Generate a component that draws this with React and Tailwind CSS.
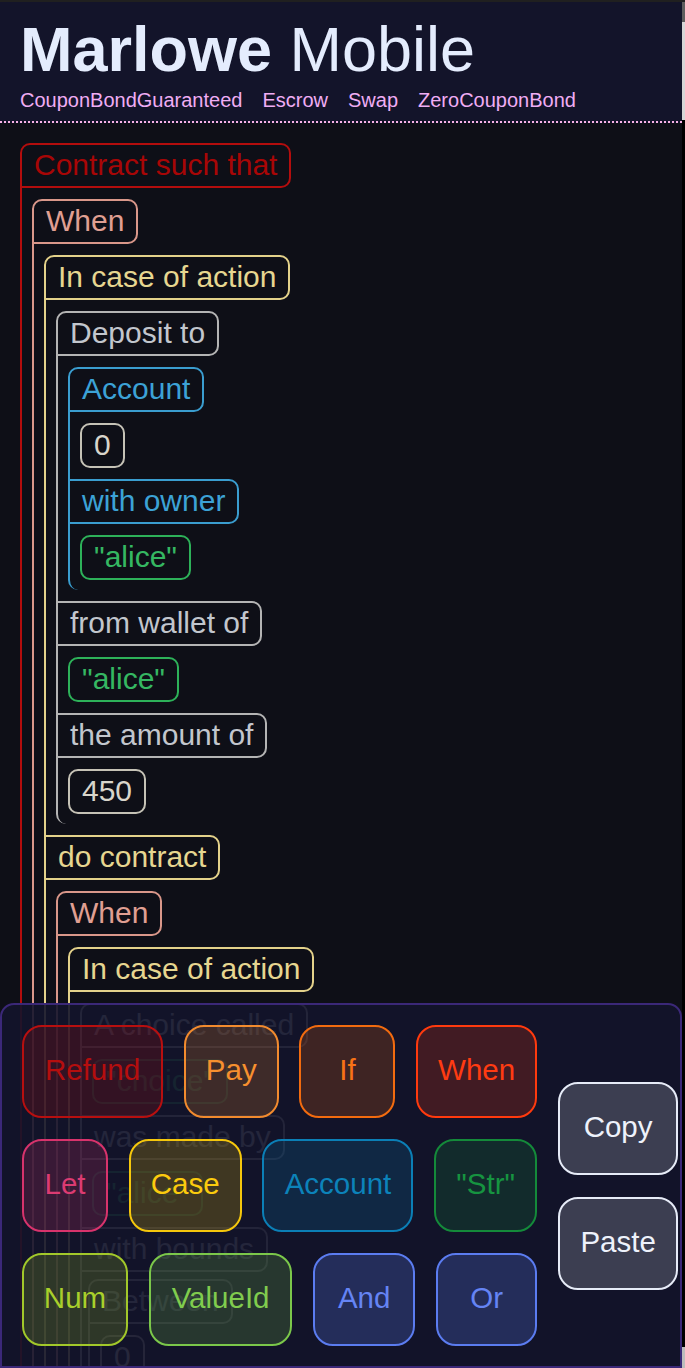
const T = {
    contract: 'border-[#b30d0d] text-[#a80606]',
    when: 'border-[#d9978a] text-[#e09f92]',
    case: 'border-[#e3d18a] text-[#e6d690]',
    action: 'border-[#b4b4b4] text-[#c2c6cd]',
    account: 'border-[#3a9dcf] text-[#3ca2d6]',
    num: 'border-[#c5c2b6] text-[#d8d5cb]',
    str: 'border-[#2db159] text-[#35b762]',
};

const box = 'h-[45px] px-3 pb-[2px] border-2 flex items-center text-[30px] leading-none whitespace-nowrap';

function Label({ tone, children }) {
    return <div className={`${box} -ml-[2px] rounded-tr-[10px] rounded-br-[10px] ${tone}`}>{children}</div>;
}

function Leaf({ tone, children }) {
    return <div className={`${box} ml-[10px] rounded-[10px] ${tone}`}>{children}</div>;
}

function Node({ title, tone, child, children }) {
    return (
        <div className={`flex flex-col items-start ${child ? 'ml-[10px]' : ''}`}>
            <div className={`${box} rounded-t-[10px] rounded-br-[10px] ${tone}`}>{title}</div>
            <div className={`border-l-2 rounded-bl-[10px] pt-[11px] pb-[10px] flex flex-col items-start gap-[11px] ${tone}`}>
                {children}
            </div>
        </div>
    );
}

function Key({ className, children }) {
    return (
        <div className={`h-[93px] pb-[3px] rounded-[20px] border-2 flex items-center justify-center text-[29.5px] leading-none ${className}`}>
            {children}
        </div>
    );
}

export default function App() {
    return (
        <div
            className="relative h-[1368px] overflow-hidden flex bg-[#0e0f17] border-t-2 border-[#202020]"
            style={{ fontFamily: '"Liberation Sans", Arial, sans-serif' }}
        >
            <div className="w-[682px] flex flex-col">
                <header className="bg-[#13142a] pl-5 pt-[16px] pb-[9px] border-b-2 border-dotted border-[#f7b2e6]">
                    <h1 className="text-[63px] leading-[62px] text-[#e4ecfd]">
                        <span className="font-bold">Marlowe</span> Mobile
                    </h1>
                    <nav className="mt-[8px] flex gap-5 text-[20px] leading-[24px] text-[#f0adf4]">
                        <span>CouponBondGuaranteed</span>
                        <span>Escrow</span>
                        <span>Swap</span>
                        <span>ZeroCouponBond</span>
                    </nav>
                </header>

                <main className="pl-5 pt-5">
                    <Node title="Contract such that" tone={T.contract}>
                        <Node title="When" tone={T.when} child>
                            <Node title="In case of action" tone={T.case} child>
                                <Node title="Deposit to" tone={T.action} child>
                                    <Node title="Account" tone={T.account} child>
                                        <Leaf tone={T.num}>0</Leaf>
                                        <Label tone={T.account}>with owner</Label>
                                        <Leaf tone={T.str}>"alice"</Leaf>
                                    </Node>
                                    <Label tone={T.action}>from wallet of</Label>
                                    <Leaf tone={T.str}>"alice"</Leaf>
                                    <Label tone={T.action}>the amount of</Label>
                                    <Leaf tone={T.num}>450</Leaf>
                                </Node>
                                <Label tone={T.case}>do contract</Label>
                                <Node title="When" tone={T.when} child>
                                    <Node title="In case of action" tone={T.case} child>
                                        <Node title="A choice called" tone={T.action} child>
                                            <Leaf tone={T.str}>"choice"</Leaf>
                                            <Label tone={T.action}>was made by</Label>
                                            <Leaf tone={T.str}>"alice"</Leaf>
                                            <Label tone={T.action}>with bounds</Label>
                                            <div className="-mt-[4px] -ml-[4px]">
                                                <Node title="Between" tone={T.action} child>
                                                    <Leaf tone={T.num}>0</Leaf>
                                                </Node>
                                            </div>
                                        </Node>
                                    </Node>
                                </Node>
                            </Node>
                        </Node>
                    </Node>
                </main>
            </div>

            <div className="w-[3px] flex flex-col">
                <div className="h-[20px] bg-[#5e5e5e]" />
                <div className="h-[98px] bg-[#d6d6d6]" />
                <div className="flex-1 bg-black" />
                <div className="h-[21px] bg-[#bdbdbd]" />
            </div>

            <div className="absolute left-0 bottom-0 w-[682px] h-[365px] rounded-t-[14px] border-2 border-[#3b2878] bg-[#13142b]/90 flex items-center pl-[20px] pr-[2px] gap-[21px]">
                <div className="w-[516px] flex flex-col gap-[21px]">
                    <div className="flex justify-between">
                        <Key className="w-[141px] border-[#b80f0f] bg-[#b80f0f]/20 text-[#b50e0e]">Refund</Key>
                        <Key className="w-[95px] border-[#f28b2e] bg-[#f28b2e]/20 text-[#f7902f]">Pay</Key>
                        <Key className="w-[96px] border-[#f26b0f] bg-[#f26b0f]/20 text-[#f77216]">If</Key>
                        <Key className="w-[121px] border-[#ff3a0e] bg-[#ff3a0e]/20 text-[#ff3b12]">When</Key>
                    </div>
                    <div className="flex justify-between">
                        <Key className="w-[86px] border-[#d8336c] bg-[#d8336c]/20 text-[#dc3b72]">Let</Key>
                        <Key className="w-[113px] border-[#f5c70c] bg-[#f5c70c]/20 text-[#fbcb0e]">Case</Key>
                        <Key className="w-[151px] border-[#0b7fb6] bg-[#0b7fb6]/20 text-[#0c83ba]">Account</Key>
                        <Key className="w-[103px] border-[#148a3a] bg-[#148a3a]/20 text-[#169440]">"Str"</Key>
                    </div>
                    <div className="flex justify-between">
                        <Key className="w-[106px] border-[#a2c82a] bg-[#a2c82a]/20 text-[#a9cf2b]">Num</Key>
                        <Key className="w-[143px] border-[#7bc74a] bg-[#7bc74a]/20 text-[#80cc4e]">ValueId</Key>
                        <Key className="w-[102px] border-[#5b7cf0] bg-[#5b7cf0]/25 text-[#6584f4]">And</Key>
                        <Key className="w-[101px] border-[#5b7cf0] bg-[#5b7cf0]/25 text-[#6584f4]">Or</Key>
                    </div>
                </div>
                <div className="w-[120px] flex flex-col gap-[22px]">
                    <Key className="h-[92px] border-[#e6ebf7] bg-[#e6ebf7]/20 text-[#eef2fb]">Copy</Key>
                    <Key className="h-[92px] border-[#e6ebf7] bg-[#e6ebf7]/20 text-[#eef2fb]">Paste</Key>
                </div>
            </div>
        </div>
    );
}
